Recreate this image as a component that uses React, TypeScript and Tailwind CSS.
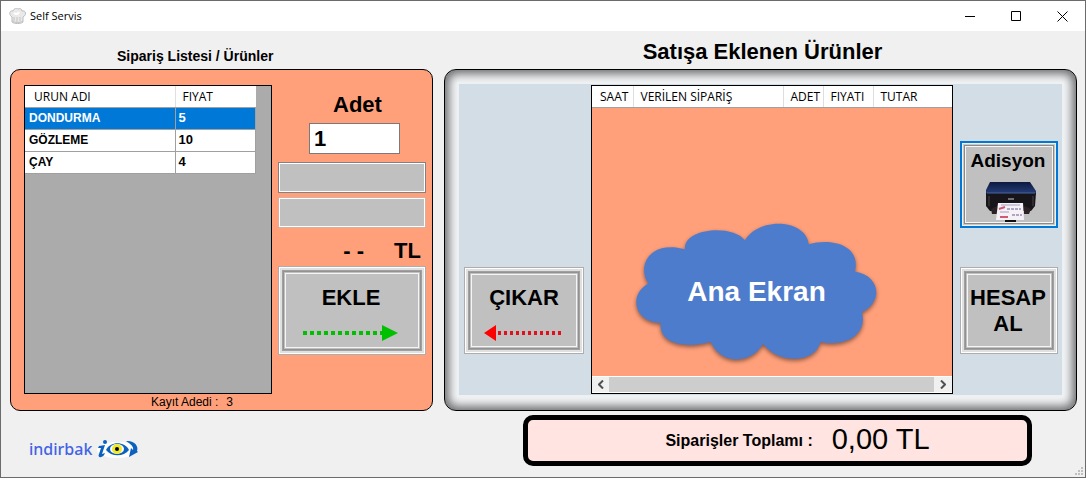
import type { ReactNode } from "react";

const products = [
  { name: "DONDURMA", price: 5 },
  { name: "GÖZLEME", price: 10 },
  { name: "ÇAY", price: 4 }
];

const orderColumns = [
  { label: "SAAT", className: "w-[41px] pl-2" },
  { label: "VERİLEN SİPARİŞ", className: "w-[150px] pl-[7px]" },
  { label: "ADET", className: "w-10 pl-[7px]" },
  { label: "FIYATI", className: "w-[50px] pl-[7px]" },
  { label: "TUTAR", className: "pl-[7px]" }
];

const gridFont = "font-['Open_Sans','Noto_Sans',sans-serif]";

function BevelButton({ children, className, focused = false }: { children: ReactNode; className: string; focused?: boolean }) {
  const frame = focused
    ? "border-2 border-[#0078d7] shadow-[inset_0_0_0_1px_#f0f0f0,inset_0_0_0_2px_#c8c8c8,inset_0_0_0_3px_#8a8a8a,inset_0_0_0_4px_#f5f5f5]"
    : "border border-[#adadad] shadow-[inset_0_0_0_1px_#ffffff,inset_0_0_0_3px_#e0e0e0,inset_0_0_0_4px_#a0a0a0,inset_0_0_0_5px_#929292,inset_0_0_0_6px_#c0c0c0,inset_0_0_0_7px_#f5f5f5]";
  return (
    <button type="button" className={`flex shrink-0 flex-col items-center bg-[#c0c0c0] text-[22px] leading-[26px] font-bold ${frame} ${className}`}>
      {children}
    </button>
  );
}

function RightArrow() {
  return (
    <svg width="96" height="18" viewBox="0 0 96 18" aria-hidden="true">
      <path d="M0 9H80" stroke="#00c000" strokeWidth="4" strokeDasharray="4 3" />
      <path d="M79 1L95 9L79 17Z" fill="#00c000" />
    </svg>
  );
}

function LeftArrow() {
  return (
    <svg width="80" height="18" viewBox="0 0 80 18" aria-hidden="true">
      <path d="M78 9H12" stroke="#e0101c" strokeWidth="4" strokeDasharray="3 3" />
      <path d="M13 1L1 9L13 17Z" fill="#ff0000" />
    </svg>
  );
}

function Printer() {
  return (
    <svg width="52" height="42" viewBox="0 0 52 42" aria-hidden="true">
      <defs>
        <linearGradient id="lid" x1="0" y1="0" x2="0" y2="1">
          <stop offset="0" stopColor="#0d1a3e" />
          <stop offset="1" stopColor="#263f7d" />
        </linearGradient>
      </defs>
      <path d="M5 1H45L51 10V13H1V9Z" fill="url(#lid)" />
      <path d="M1 12H51L50 25L46 30H5L1 25Z" fill="#17151a" />
      <path d="M2 12H50" stroke="#49649d" />
      <path d="M4 15V25M48 15V25" stroke="#4a4444" />
      <path d="M23 18H29" stroke="#c9c9c9" />
      <path d="M6 28L12 25V33H7ZM46 28L39 25V33H44Z" fill="#2b2225" />
      <path d="M13 22H38L39 39H11Z" fill="#f6f1f7" />
      <path d="M16 24H35M15 31H24" stroke="#a99abc" />
      <path d="M14 28L20 26M15 36H23" stroke="#cf5a72" strokeWidth="2" />
      <path d="M22 28H36M27 34H37" stroke="#6c5d8c" strokeDasharray="3 1" />
      <path d="M20 40H31" stroke="#111111" strokeWidth="2" />
    </svg>
  );
}

function ChefHat() {
  return (
    <svg width="17" height="17" viewBox="0 0 17 17" aria-hidden="true">
      <path d="M3 9C-1 6 1 2 4 3C5 0 8 0 9 1C11 0 13 1 13 3C17 2 18 7 14 9V14C12 16 5 16 3 14Z" fill="#e9e9e9" stroke="#bdbdbd" />
      <path d="M5 9V13M8 9V14M11 9V13M3 13C6 15 11 15 14 13" fill="none" stroke="#c4c4c4" />
      <path d="M5 5C7 7 9 6 10 4" fill="none" stroke="#ffffff" strokeWidth="2" />
    </svg>
  );
}

function TitleBar() {
  return (
    <header className="flex h-[30px] items-center bg-white pl-2">
      <ChefHat />
      <h1 className={`ml-1 flex-1 text-[11px] ${gridFont}`}>Self Servis</h1>
      <button type="button" aria-label="Minimize" className="flex h-full w-[46px] items-center justify-center">
        <svg width="11" height="11"><path d="M0 5.5H10" stroke="#000" /></svg>
      </button>
      <button type="button" aria-label="Maximize" className="flex h-full w-[46px] items-center justify-center">
        <svg width="11" height="11"><path d="M.5 .5H9.5V9.5H.5Z" fill="none" stroke="#000" /></svg>
      </button>
      <button type="button" aria-label="Close" className="flex h-full w-[46px] items-center justify-center">
        <svg width="11" height="11"><path d="M.5 .5L10.5 10.5M10.5 .5L.5 10.5" stroke="#000" /></svg>
      </button>
    </header>
  );
}

function ProductPanel() {
  return (
    <section className="flex flex-col rounded-[10px] border border-black bg-[#ffa07a] pt-[15px] pr-[6px] pl-[13px]">
      <div className="flex gap-[6px]">
        <div className="min-h-[309px] flex-1 border border-black bg-[#ababab]">
          <table className="w-[231px] table-fixed border-collapse bg-white text-left text-[13px]">
            <thead className={`text-[12px] ${gridFont}`}>
              <tr className="h-[21px]">
                <th className="w-[150px] border-r border-b border-r-[#e0e0e0] border-b-[#a0a0a0] pt-px pl-[9px] leading-4 font-normal">URUN ADI</th>
                <th className="border-b border-b-[#a0a0a0] pt-px pl-[7px] leading-4 font-normal">FIYAT</th>
              </tr>
            </thead>
            <tbody>
              {products.map((product, index) => (
                <tr key={product.name} className={`h-[22px] ${index === 0 ? "bg-[#0078d7] text-white" : ""}`}>
                  <td className="border-r border-b border-[#a0a0a0] pl-1 text-xs leading-4 font-bold">{product.name}</td>
                  <td className="border-r border-b border-[#a0a0a0] pl-[3px] leading-4 font-bold">{product.price}</td>
                </tr>
              ))}
            </tbody>
          </table>
        </div>
        <div className="flex w-[148px] flex-col">
          <label htmlFor="quantity" className="mt-[6px] pl-[55px] text-[22px] leading-7 font-bold">Adet</label>
          <input id="quantity" defaultValue="1" className="mt-1 ml-[31px] h-[31px] w-[91px] border border-[#7a7a7a] bg-white px-1 text-[22px] font-bold" />
          <input aria-label="Ürün" readOnly className="mt-2 h-[31px] border border-[#828282] bg-[#c0c0c0] shadow-[inset_0_0_0_1px_#ffffff]" />
          <input aria-label="Fiyat" readOnly className="mt-1 h-[31px] border border-[#d8b0a0] bg-[#c0c0c0] shadow-[inset_0_0_0_1px_#ffffff]" />
          <p className="mt-[7px] flex h-[31px] items-center justify-end gap-[30px] pr-[5px] text-[22px] font-bold">
            <span>- -</span>
            <span>TL</span>
          </p>
          <BevelButton className="h-[89px] pt-[18px] pr-[2px]">
            <span>EKLE</span>
            <span className="mt-[13px]"><RightArrow /></span>
          </BevelButton>
        </div>
      </div>
      <p className="flex justify-center gap-2 pr-[66px] text-xs leading-4">
        <span>Kayıt Adedi :</span>
        <span>3</span>
      </p>
    </section>
  );
}

function CloudLabel() {
  return (
    <div className="absolute top-[113px] left-[41px] flex h-[143px] w-[247px] items-center justify-center">
      <svg className="absolute inset-0 h-full w-full overflow-visible drop-shadow-[0_2px_2px_rgba(0,0,0,0.45)]" viewBox="40 30 740 430" aria-hidden="true">
        <path
          fill="#4e7ccc"
          d="M85 218C50 170 85 85 195 115C190 50 340 40 375 88C420 15 560 25 567 100C640 80 725 105 706 182C785 195 790 275 727 304C745 370 680 410 602 394C590 455 480 465 430 400C390 465 300 460 272 393C200 415 115 400 122 337C40 335 25 250 85 218Z"
        />
      </svg>
      <span className="relative text-[28px] font-bold text-white">Ana Ekran</span>
    </div>
  );
}

function OrderList() {
  return (
    <div className="mx-[7px] mt-px mb-px flex min-w-0 flex-1 flex-col border border-black bg-[#ffa07a]">
      <table className="w-full table-fixed border-collapse bg-white text-left">
        <thead>
          <tr className="h-[21px]">
            {orderColumns.map((column) => (
              <th key={column.label} className={`border-r border-b border-r-[#dedede] border-b-[#a0a0a0] pt-px text-[12px] leading-4 font-normal whitespace-nowrap last:border-r-0 ${gridFont} ${column.className}`}>
                {column.label}
              </th>
            ))}
          </tr>
        </thead>
      </table>
      <div className="relative flex-1">
        <CloudLabel />
      </div>
      <div className="flex h-[17px] border-y border-white bg-[#f0f0f0]">
        <button type="button" aria-label="Scroll left" className="flex w-[17px] items-center justify-center">
          <svg width="6" height="9" viewBox="0 0 6 9"><path d="M5 .5L1 4.5L5 8.5" fill="none" stroke="#505050" strokeWidth="2" /></svg>
        </button>
        <div className="flex-1 bg-[#cdcdcd]" />
        <button type="button" aria-label="Scroll right" className="flex w-[18px] items-center justify-center">
          <svg width="6" height="9" viewBox="0 0 6 9"><path d="M1 .5L5 4.5L1 8.5" fill="none" stroke="#505050" strokeWidth="2" /></svg>
        </button>
      </div>
    </div>
  );
}

function OrderPanel() {
  return (
    <section className="flex rounded-[12px] border border-black bg-[#f2f4f6] px-[14px] pt-[14px] pb-[15px] shadow-[inset_0_0_10px_4px_#6c6e70]">
      <div className="flex flex-1 bg-[#d3dde6] pr-1 pl-[5px] shadow-[0_0_0_2px_#eef1f4]">
        <div className="flex items-end pb-[41px]">
          <BevelButton className="h-[87px] w-[120px] pt-[17px]">
            <span>ÇIKAR</span>
            <span className="mt-[13px] mr-[2px]"><LeftArrow /></span>
          </BevelButton>
        </div>
        <OrderList />
        <div className="flex flex-col justify-end gap-[39px] pb-[41px]">
          <BevelButton focused className="h-[87px] w-[98px] pt-1 pr-[2px]">
            <span className="text-[19px] leading-7">Adisyon</span>
            <span className="mt-[6px] ml-[5px]"><Printer /></span>
          </BevelButton>
          <BevelButton className="h-[87px] w-[98px] pt-[17px] pr-[2px]">
            <span>HESAP</span>
            <span>AL</span>
          </BevelButton>
        </div>
      </div>
    </section>
  );
}

function Logo() {
  return (
    <a href="#" className="flex items-center gap-1 font-['Noto_Sans',sans-serif] text-base font-medium text-[#4263e6]">
      indirbak
      <svg width="44" height="20" viewBox="0 0 44 20" aria-hidden="true">
        <ellipse cx="21" cy="11" rx="20" ry="8" fill="#ffffff" />
        <circle cx="9" cy="3" r="2" fill="#0b61bd" />
        <path d="M3 7L9 6L6 15L9 14L8 16C6 19 1 19 3 15L5 9L2 9Z" fill="#0b61bd" />
        <path d="M10 11C14 2 29 2 33 11C28 18 15 18 10 11Z" fill="#0b61bd" />
        <ellipse cx="21" cy="10" rx="7" ry="5" fill="#ffffff" />
        <circle cx="21" cy="10" r="5" fill="#f0e92c" />
        <circle cx="21" cy="10" r="2" fill="#000000" />
        <path d="M30 2C38 1 43 7 41 12L42 13L33 18L35 9L37 11C38 8 35 5 30 2Z" fill="#0b61bd" />
      </svg>
    </a>
  );
}

export default function App() {
  return (
    <div className="relative flex min-h-screen flex-col border border-[#6b6b6b] bg-[#f0f0f0] font-['Liberation_Sans',Arial,sans-serif] text-black">
      <TitleBar />
      <main className="pr-2 pl-[9px]">
        <div className="grid grid-cols-[423fr_633fr] gap-x-[11px]">
          <h2 className="flex h-[38px] items-center pt-3 pl-[107px] text-sm font-bold">Sipariş Listesi / Ürünler</h2>
          <h2 className="flex h-[38px] items-center justify-center pt-[2px] pl-1 text-[22px] font-bold">Satışa Eklenen Ürünler</h2>
          <ProductPanel />
          <OrderPanel />
        </div>
        <footer className="mt-1 flex items-center justify-between pr-[45px] pl-[19px]">
          <div className="pt-4"><Logo /></div>
          <div className="flex h-[51px] w-[509px] items-center justify-center gap-[19px] rounded-[10px] border-[5px] border-black bg-[#ffe4e1] pl-10">
            <span className="text-base font-bold">Siparişler Toplamı :</span>
            <output className="pb-[2px] text-[29px]">0,00 TL</output>
          </div>
        </footer>
      </main>
      <svg width="9" height="9" className="absolute right-px bottom-px" aria-hidden="true">
        <path d="M6 1H8M3 4H5M6 4H8M0 7H2M3 7H5M6 7H8" stroke="#bfbfbf" strokeWidth="2" />
      </svg>
    </div>
  );
}
